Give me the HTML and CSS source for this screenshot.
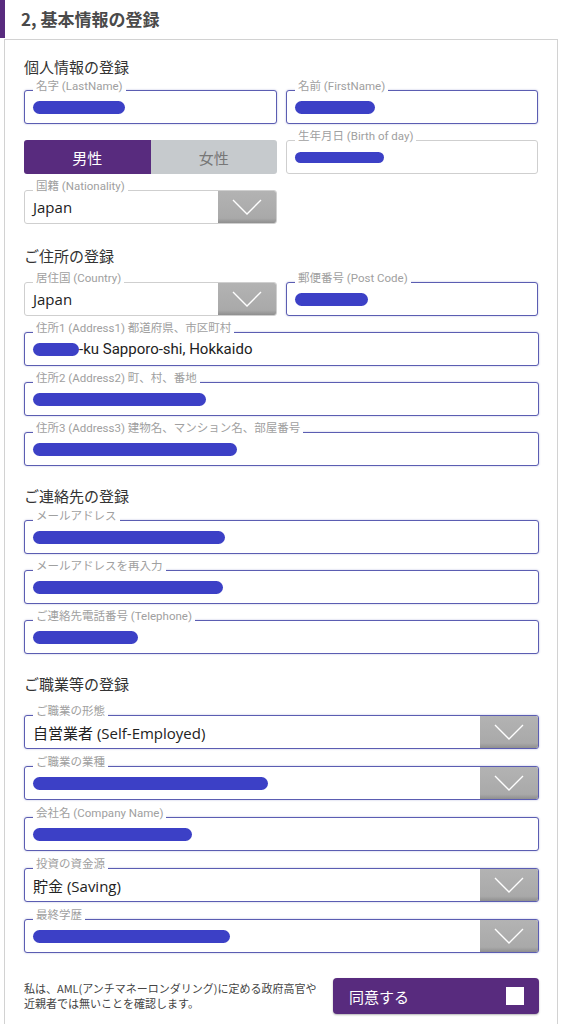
FILE: index.html
```html
<!DOCTYPE html>
<html lang="ja">
<head>
    <meta charset="UTF-8">
    <meta name="viewport" content="width=device-width, initial-scale=1.0">
    <link rel="stylesheet" href="styles.css">
    <title>基本情報の登録</title>
</head>
<body>
    <h1 class="step-title">2, 基本情報の登録</h1>

    <div class="panel">
        <h2 class="section-title">個人情報の登録</h2>
        <div class="rows">
            <div class="cols">
                <div class="field">
                    <span class="field-label">名字 (LastName)</span>
                    <div class="box active"><span class="mask" style="width: 92px"></span></div>
                </div>
                <div class="field">
                    <span class="field-label">名前 (FirstName)</span>
                    <div class="box active"><span class="mask" style="width: 80px"></span></div>
                </div>
            </div>
            <div class="cols">
                <div class="gender">
                    <span class="gender-opt selected">男性</span>
                    <span class="gender-opt">女性</span>
                </div>
                <div class="field">
                    <span class="field-label">生年月日 (Birth of day)</span>
                    <div class="box"><span class="mask thin" style="width: 89px"></span></div>
                </div>
            </div>
            <div class="cols">
                <div class="field">
                    <span class="field-label">国籍 (Nationality)</span>
                    <div class="box select">
                        <span class="value">Japan</span>
                        <span class="arrow"><svg width="30" height="16" viewBox="0 0 30 16"><polyline points="1,1 15,15 29,1" fill="none" stroke="#fff" stroke-width="1.4"/></svg></span>
                    </div>
                </div>
            </div>
        </div>

        <h2 class="section-title loose">ご住所の登録</h2>
        <div class="rows">
            <div class="cols">
                <div class="field">
                    <span class="field-label">居住国 (Country)</span>
                    <div class="box select">
                        <span class="value">Japan</span>
                        <span class="arrow"><svg width="30" height="16" viewBox="0 0 30 16"><polyline points="1,1 15,15 29,1" fill="none" stroke="#fff" stroke-width="1.4"/></svg></span>
                    </div>
                </div>
                <div class="field">
                    <span class="field-label">郵便番号 (Post Code)</span>
                    <div class="box active"><span class="mask" style="width: 73px"></span></div>
                </div>
            </div>
            <div class="field">
                <span class="field-label">住所1 (Address1) 都道府県、市区町村</span>
                <div class="box active"><span class="mask" style="width: 46px"></span><span class="value plain">-ku Sapporo-shi, Hokkaido</span></div>
            </div>
            <div class="field">
                <span class="field-label">住所2 (Address2) 町、村、番地</span>
                <div class="box active"><span class="mask" style="width: 173px"></span></div>
            </div>
            <div class="field">
                <span class="field-label">住所3 (Address3) 建物名、マンション名、部屋番号</span>
                <div class="box active"><span class="mask" style="width: 204px"></span></div>
            </div>
        </div>

        <h2 class="section-title">ご連絡先の登録</h2>
        <div class="rows">
            <div class="field">
                <span class="field-label">メールアドレス</span>
                <div class="box active"><span class="mask" style="width: 192px"></span></div>
            </div>
            <div class="field">
                <span class="field-label">メールアドレスを再入力</span>
                <div class="box active"><span class="mask" style="width: 190px"></span></div>
            </div>
            <div class="field">
                <span class="field-label">ご連絡先電話番号 (Telephone)</span>
                <div class="box active"><span class="mask" style="width: 105px"></span></div>
            </div>
        </div>

        <h2 class="section-title wide">ご職業等の登録</h2>
        <div class="rows spaced">
            <div class="field">
                <span class="field-label">ご職業の形態</span>
                <div class="box active select">
                    <span class="value">自営業者 (Self-Employed)</span>
                    <span class="arrow"><svg width="30" height="16" viewBox="0 0 30 16"><polyline points="1,1 15,15 29,1" fill="none" stroke="#fff" stroke-width="1.4"/></svg></span>
                </div>
            </div>
            <div class="field">
                <span class="field-label">ご職業の業種</span>
                <div class="box active select">
                    <span class="value"><span class="mask" style="width: 235px"></span></span>
                    <span class="arrow"><svg width="30" height="16" viewBox="0 0 30 16"><polyline points="1,1 15,15 29,1" fill="none" stroke="#fff" stroke-width="1.4"/></svg></span>
                </div>
            </div>
            <div class="field">
                <span class="field-label">会社名 (Company Name)</span>
                <div class="box active"><span class="mask" style="width: 159px"></span></div>
            </div>
            <div class="field">
                <span class="field-label">投資の資金源</span>
                <div class="box active select">
                    <span class="value">貯金 (Saving)</span>
                    <span class="arrow"><svg width="30" height="16" viewBox="0 0 30 16"><polyline points="1,1 15,15 29,1" fill="none" stroke="#fff" stroke-width="1.4"/></svg></span>
                </div>
            </div>
            <div class="field">
                <span class="field-label">最終学歴</span>
                <div class="box active select">
                    <span class="value"><span class="mask" style="width: 197px"></span></span>
                    <span class="arrow"><svg width="30" height="16" viewBox="0 0 30 16"><polyline points="1,1 15,15 29,1" fill="none" stroke="#fff" stroke-width="1.4"/></svg></span>
                </div>
            </div>
        </div>

        <div class="agree-row">
            <p class="agree-text">私は、AML(アンチマネーロンダリング)に定める政府高官や<br>近親者では無いことを確認します。</p>
            <button class="agree-btn" type="button">同意する<span class="check"></span></button>
        </div>
    </div>
</body>
</html>
```

FILE: styles.css
```css
body {
    margin: 0;
    background-color: white;
    font-family: "Noto Sans CJK JP", sans-serif;
    color: #333;
}

.step-title {
    margin: 0;
    height: 38px;
    padding-left: 16px;
    border-left: 5px solid #582b7e;
    font-size: 17px;
    line-height: 38px;
    font-weight: bold;
    color: #4a4a4a;
}

.panel {
    margin: 1px 10px 0 4px;
    padding: 17px 18px 40px 19px;
    border: 1px solid #d2d2d2;
    border-bottom: none;
}

.section-title {
    margin: 20px 0 14px;
    font-size: 15px;
    line-height: 20px;
    font-weight: normal;
    color: #333;
}

.section-title:first-child {
    margin-top: 0;
    margin-bottom: 13px;
}

.section-title.loose {
    margin-top: 22px;
    margin-bottom: 16px;
}

.section-title.wide {
    margin-top: 20px;
    margin-bottom: 21px;
}

.rows {
    display: grid;
    gap: 16px;
}

.rows.spaced {
    gap: 17px;
}

.cols {
    display: grid;
    grid-template-columns: 253px 252px;
    gap: 9px;
}

.field {
    position: relative;
}

.field-label {
    position: absolute;
    top: -10px;
    left: 9px;
    z-index: 1;
    padding: 0 3px;
    background-color: white;
    font-family: Roboto, "Noto Sans CJK JP", sans-serif;
    font-size: 11.5px;
    line-height: 13px;
    color: #a0a0a0;
}

.box {
    display: flex;
    align-items: center;
    height: 34px;
    box-sizing: border-box;
    padding-left: 8px;
    border: 1px solid #cfcfcf;
    border-radius: 3px;
    overflow: hidden;
    background-color: white;
}

.box.active {
    border-color: #5b5db2;
    box-shadow: 0 0 2px rgba(91, 93, 178, 0.45);
}

.value {
    flex: 1;
    display: flex;
    align-items: center;
    font-family: "Open Sans", "Noto Sans CJK JP", sans-serif;
    font-size: 15px;
    color: #222;
}

.value.plain {
    flex: none;
    font-family: Roboto, "Noto Sans CJK JP", sans-serif;
}

.mask {
    display: inline-block;
    height: 13px;
    border-radius: 7px;
    background-color: #3c40c6;
}

.mask.thin {
    height: 11px;
}

.arrow {
    display: flex;
    align-items: center;
    justify-content: center;
    width: 58px;
    height: 100%;
    background: linear-gradient(#b3b3b3, #a9a9a9 85%, #8f8f8f);
}

.gender {
    display: flex;
    height: 34px;
    border-radius: 3px;
    overflow: hidden;
}

.gender-opt {
    flex: 1;
    display: flex;
    align-items: center;
    justify-content: center;
    background-color: #c6cacd;
    font-size: 15px;
    color: #777;
}

.gender-opt.selected {
    background-color: #582b7e;
    color: white;
}

.agree-row {
    display: flex;
    align-items: center;
    justify-content: space-between;
    margin-top: 25px;
}

.agree-text {
    margin: 0;
    font-size: 11px;
    line-height: 15px;
    color: #444;
}

.agree-btn {
    display: flex;
    align-items: center;
    justify-content: space-between;
    width: 206px;
    height: 36px;
    padding: 0 15px 0 16px;
    border: none;
    border-radius: 4px;
    background-color: #582b7e;
    box-shadow: 0 1px 2px rgba(0, 0, 0, 0.3);
    font-family: "Noto Sans CJK JP", sans-serif;
    font-size: 15px;
    color: white;
}

.check {
    width: 18px;
    height: 18px;
    background-color: white;
}
```
